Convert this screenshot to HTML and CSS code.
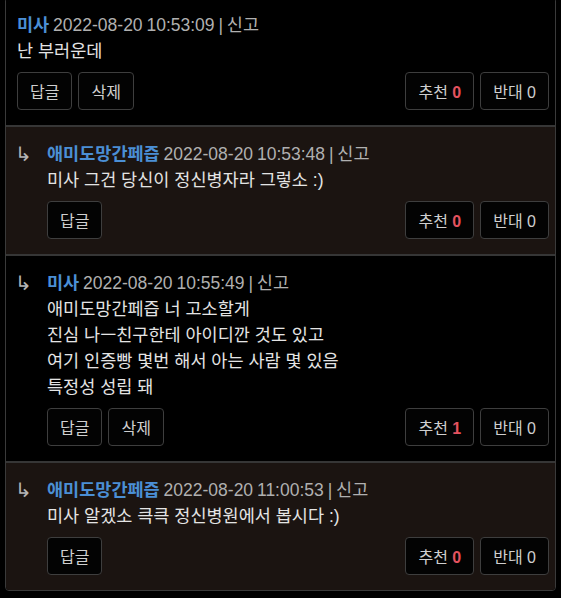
FILE: index.html
```html
<!DOCTYPE html>
<html lang="ko">
<head>
    <meta charset="UTF-8">
    <meta name="viewport" content="width=device-width, initial-scale=1.0">
    <title>댓글</title>
    <link rel="stylesheet" href="styles.css">
</head>
<body>
    <div class="comments">
        <div class="comment">
            <div class="comment-body">
                <div class="meta"><span class="name">미사</span> <span class="date">2022-08-20 10:53:09</span> | <a class="report">신고</a></div>
                <div class="text">난 부러운데</div>
                <div class="actions">
                    <div class="left">
                        <button>답글</button>
                        <button>삭제</button>
                    </div>
                    <div class="right">
                        <button>추천 <b class="up">0</b></button>
                        <button>반대 0</button>
                    </div>
                </div>
            </div>
        </div>

        <div class="comment reply">
            <span class="arrow">↳</span>
            <div class="comment-body">
                <div class="meta"><span class="name">애미도망간페즙</span> <span class="date">2022-08-20 10:53:48</span> | <a class="report">신고</a></div>
                <div class="text">미사 그건 당신이 정신병자라 그렇소 :)</div>
                <div class="actions">
                    <div class="left">
                        <button>답글</button>
                    </div>
                    <div class="right">
                        <button>추천 <b class="up">0</b></button>
                        <button>반대 0</button>
                    </div>
                </div>
            </div>
        </div>

        <div class="comment">
            <span class="arrow">↳</span>
            <div class="comment-body">
                <div class="meta"><span class="name">미사</span> <span class="date">2022-08-20 10:55:49</span> | <a class="report">신고</a></div>
                <div class="text">애미도망간페즙 너 고소할게<br>진심 나ㅡ친구한테 아이디깐 것도 있고<br>여기 인증빵 몇번 해서 아는 사람 몇 있음<br>특정성 성립 돼</div>
                <div class="actions">
                    <div class="left">
                        <button>답글</button>
                        <button>삭제</button>
                    </div>
                    <div class="right">
                        <button>추천 <b class="up">1</b></button>
                        <button>반대 0</button>
                    </div>
                </div>
            </div>
        </div>

        <div class="comment reply">
            <span class="arrow">↳</span>
            <div class="comment-body">
                <div class="meta"><span class="name">애미도망간페즙</span> <span class="date">2022-08-20 11:00:53</span> | <a class="report">신고</a></div>
                <div class="text">미사 알겠소 큭큭 정신병원에서 봅시다 :)</div>
                <div class="actions">
                    <div class="left">
                        <button>답글</button>
                    </div>
                    <div class="right">
                        <button>추천 <b class="up">0</b></button>
                        <button>반대 0</button>
                    </div>
                </div>
            </div>
        </div>
    </div>
</body>
</html>
```

FILE: styles.css
```css
body {
    margin: 0;
    background: #000;
    color: #e4e4e4;
    font-family: "Liberation Sans", "Noto Sans CJK KR", sans-serif;
    font-size: 17.5px;
}

.comments {
    margin: -3px 5px 10px 5px;
    border: 1px solid #3a3a3a;
    border-radius: 4px;
    overflow: hidden;
}

.comment {
    display: flex;
    padding: 14px 6px 15px 11px;
    background: #000;
    border-bottom: 2px solid #363636;
}

.comment:last-child {
    border-bottom: none;
}

.comment.reply {
    background: #1b1411;
}

.arrow {
    width: 30px;
    margin-left: -2px;
    margin-right: 2px;
    flex-shrink: 0;
    line-height: 26px;
    color: #b5b5b5;
    font-size: 20px;
}

.comment-body {
    flex: 1;
}

.meta,
.text {
    line-height: 26px;
}

.meta {
    color: #b0b0b0;
    word-spacing: -1px;
}

.name {
    color: #4b8fd5;
    font-weight: bold;
}

.report {
    color: #b0b0b0;
    cursor: pointer;
}

.actions {
    display: flex;
    justify-content: space-between;
    margin-top: 8px;
}

.left,
.right {
    display: flex;
    gap: 6px;
}

button {
    height: 38px;
    padding: 0 12px;
    border: 1px solid #3e3e3e;
    border-radius: 4px;
    background: #030303;
    color: #cfcfcf;
    font-family: inherit;
    font-size: 16px;
    cursor: pointer;
}

button:hover {
    background: #111;
}

.up {
    color: #e5525f;
}
```
